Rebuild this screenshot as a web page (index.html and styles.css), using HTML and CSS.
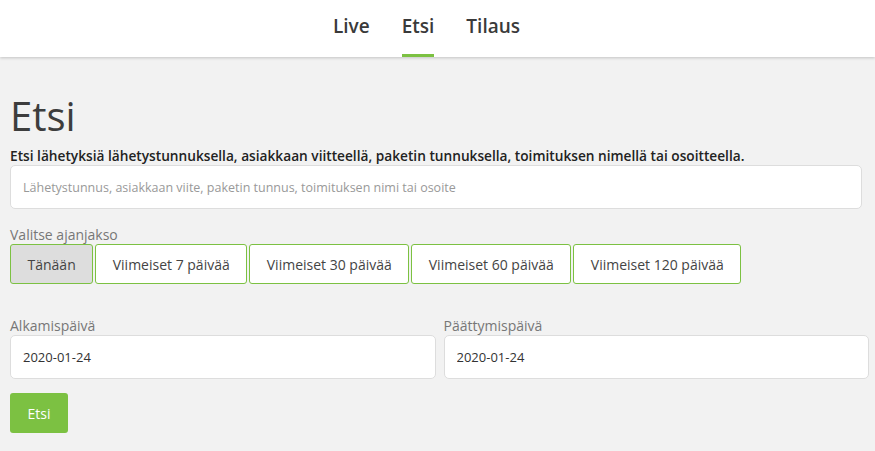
FILE: index.html
```html
<!DOCTYPE html>
<html lang="fi">
<head>
	<meta charset="UTF-8">
	<title>Etsi</title>
	<link rel="stylesheet" href="styles.css">
</head>
<body>
	<div class="header">
		<ul class="nav">
			<li><a href="#">Live</a></li>
			<li class="active"><a href="#">Etsi</a></li>
			<li><a href="#">Tilaus</a></li>
		</ul>
	</div>
	<div class="page">
		<h1>Etsi</h1>
		<p class="lead">Etsi lähetyksiä lähetystunnuksella, asiakkaan viitteellä, paketin tunnuksella, toimituksen nimellä tai osoitteella.</p>
		<input class="field search" type="text" placeholder="Lähetystunnus, asiakkaan viite, paketin tunnus, toimituksen nimi tai osoite">
		<div class="label">Valitse ajanjakso</div>
		<div class="periods">
			<button class="period selected">Tänään</button>
			<button class="period">Viimeiset 7 päivää</button>
			<button class="period">Viimeiset 30 päivää</button>
			<button class="period">Viimeiset 60 päivää</button>
			<button class="period">Viimeiset 120 päivää</button>
		</div>
		<div class="dates">
			<div>
				<div class="label">Alkamispäivä</div>
				<input class="field" type="text" value="2020-01-24">
			</div>
			<div>
				<div class="label">Päättymispäivä</div>
				<input class="field" type="text" value="2020-01-24">
			</div>
		</div>
		<button class="submit">Etsi</button>
	</div>
</body>
</html>
```

FILE: styles.css
```css
*{
	margin: 0px;
	padding: 0px;
	box-sizing: border-box;
}
body{
	font-family: "Open Sans", "Liberation Sans", sans-serif;
	background: #f2f2f2;
	color: #333;
}
.header{
	height: 57px;
	background: #fff;
	box-shadow: 0 1px 3px rgba(0,0,0,0.2);
}
.nav{
	display: flex;
	justify-content: center;
	gap: 32px;
	list-style: none;
	height: 100%;
	padding-right: 22px;
}
.nav li{
	display: flex;
	align-items: center;
	border-bottom: 3px solid transparent;
	padding-bottom: 3px;
}
.nav li.active{
	border-bottom-color: #7cc142;
}
.nav a{
	font-size: 19px;
	font-weight: 600;
	color: #3a3a3a;
	text-decoration: none;
}
.page{
	padding: 28px 6px 0 10px;
}
h1{
	font-size: 40px;
	font-weight: 400;
	color: #3d3d3d;
	line-height: 58px;
	margin-top: 2px;
}
.lead{
	font-size: 13.7px;
	font-weight: 600;
	color: #222;
	line-height: 18px;
	margin-top: 2px;
}
.field{
	display: block;
	width: 100%;
	height: 44px;
	border: 1px solid #ddd;
	border-radius: 5px;
	background: #fff;
	padding: 0 12px;
	font-family: inherit;
	font-size: 13px;
	color: #333;
	outline: none;
}
.search{
	width: 852px;
	margin-bottom: 16px;
}
.search::placeholder{
	color: #999;
	font-size: 12.5px;
}
.label{
	font-size: 14px;
	color: #777;
	line-height: 19px;
}
.periods{
	display: flex;
	gap: 2px;
}
.period{
	height: 40px;
	padding: 0 16.5px;
	border: 1px solid #7cc142;
	border-radius: 3px;
	background: #fff;
	font-family: inherit;
	font-size: 14px;
	color: #444;
}
.period.selected{
	background: #dddddd;
}
.dates{
	display: grid;
	grid-template-columns: 1fr 1fr;
	gap: 8px;
	margin-top: 32px;
}
.submit{
	margin-top: 14px;
	height: 40px;
	width: 58px;
	border: none;
	border-radius: 3px;
	background: #7cc142;
	color: #fff;
	font-family: inherit;
	font-size: 14px;
}
```
